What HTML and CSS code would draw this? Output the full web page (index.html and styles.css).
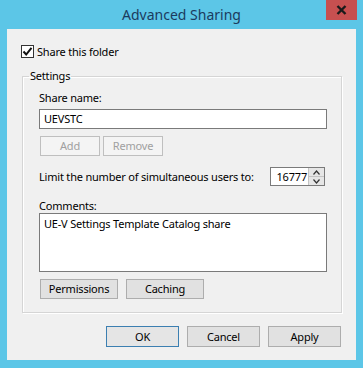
FILE: index.html
```html
<!DOCTYPE html>
<html>
<head>
<meta charset="utf-8">
<link rel="stylesheet" href="styles.css">
</head>
<body>
<div class="window">
  <div class="titlebar">
    <div class="title">Advanced Sharing</div>
    <div class="close">
      <svg width="11" height="10" viewBox="0 0 11 10"><path d="M1.5 1 L9.5 9 M9.5 1 L1.5 9" stroke="#1a1a1a" stroke-width="2.4" fill="none"/></svg>
    </div>
  </div>
  <div class="client">
    <div class="check-row">
      <span class="checkbox">
        <svg width="11" height="11" viewBox="0 0 11 11"><path d="M1.5 5.5 L4.2 8.5 L9.5 1.8" stroke="#111" stroke-width="2" fill="none"/></svg>
      </span>
      <span class="check-label">Share this folder</span>
    </div>
    <fieldset class="group">
      <legend class="legend">Settings</legend>
      <div class="label first">Share name:</div>
      <div class="textbox">UEVSTC</div>
      <div class="btn-row">
        <div class="btn disabled">Add</div>
        <div class="btn disabled">Remove</div>
      </div>
      <div class="limit-row">
        <span class="label">Limit the number of simultaneous users to:</span>
        <div class="spinner">
          <div class="spin-value">16777</div>
          <div class="spin-arrows">
            <div class="arrow"><svg width="7" height="5" viewBox="0 0 7 5"><path d="M0.5 4.5 L3.5 1 L6.5 4.5" stroke="#333" stroke-width="1.2" fill="none"/></svg></div>
            <div class="arrow"><svg width="7" height="5" viewBox="0 0 7 5"><path d="M0.5 0.5 L3.5 4 L6.5 0.5" stroke="#333" stroke-width="1.2" fill="none"/></svg></div>
          </div>
        </div>
      </div>
      <div class="label comments-label">Comments:</div>
      <div class="textarea">UE-V Settings Template Catalog share</div>
      <div class="btn-row perm-row">
        <div class="btn wide">Permissions</div>
        <div class="btn wide">Caching</div>
      </div>
    </fieldset>
    <div class="footer">
      <div class="btn dlg default">OK</div>
      <div class="btn dlg">Cancel</div>
      <div class="btn dlg">Apply</div>
    </div>
  </div>
</div>
</body>
</html>
```
FILE: styles.css
```css
html, body {
  margin: 0;
  padding: 0;
}
body {
  width: 363px;
  height: 368px;
  overflow: hidden;
  font-family: "Noto Sans", "Open Sans", sans-serif;
  font-size: 11px;
  letter-spacing: -0.2px;
  color: #000;
}
.window {
  width: 363px;
  height: 368px;
  background: #5cc6e7;
  display: flex;
  flex-direction: column;
}
.titlebar {
  height: 29px;
  display: flex;
  position: relative;
  justify-content: center;
}
.title {
  font-size: 14px;
  letter-spacing: 0;
  line-height: 29px;
  color: #1b3b5e;
}
.close {
  position: absolute;
  left: 326px;
  top: 0;
  width: 31px;
  height: 20px;
  background: #c75050;
  display: flex;
  align-items: center;
  justify-content: center;
}
.client {
  margin: 0 7px;
  height: 331px;
  background: #f0f0f0;
  display: flex;
  flex-direction: column;
}
.check-row {
  display: flex;
  align-items: center;
  margin-top: 16px;
  padding-left: 14px;
  height: 13px;
}
.checkbox {
  width: 11px;
  height: 11px;
  border: 1px solid #333;
  background: #fff;
  display: flex;
}
.check-label {
  margin-left: 3px;
  line-height: 13px;
}
.group {
  margin: 10px 14px 0 15px;
  padding: 6px 14px 13px 16px;
  border: 1px solid #d5d5d5;
  box-shadow: inset 1px 1px 0 #fff, 1px 1px 0 #fff;
  min-width: 0;
}
.legend {
  padding: 0 1px;
  margin-left: -10px;
  line-height: 16px;
}
.label {
  line-height: 16px;
}
.textbox {
  margin-top: 3px;
  height: 18px;
  border: 1px solid #7a7a7a;
  background: #fff;
  line-height: 18px;
  padding-left: 4px;
}
.btn-row {
  display: flex;
  gap: 3px;
  margin-top: 7px;
  padding-left: 1px;
}
.btn {
  height: 18px;
  border: 1px solid #adadad;
  background: #e1e1e1;
  display: flex;
  align-items: center;
  justify-content: center;
  line-height: 16px;
}
.btn.disabled {
  width: 58px;
  color: #a0a0a0;
  border-color: #bfbfbf;
  background: #f4f4f4;
}
.limit-row {
  display: flex;
  align-items: center;
  justify-content: space-between;
  margin-top: 11px;
  padding-right: 2px;
  height: 19px;
}
.spinner {
  display: flex;
  height: 19px;
  border: 1px solid #7a7a7a;
  background: #fff;
  box-sizing: border-box;
  width: 55px;
}
.spin-value {
  width: 37px;
  line-height: 17px;
  text-align: right;
  padding-right: 1px;
  box-sizing: border-box;
}
.spin-arrows {
  flex: 1;
  display: flex;
  flex-direction: column;
  background: #e6e6e6;
  border-left: 1px solid #c4c4c4;
}
.arrow {
  flex: 1;
  display: flex;
  align-items: center;
  justify-content: center;
}
.arrow + .arrow {
  border-top: 1px solid #c4c4c4;
}
.comments-label {
  margin-top: 13px;
  line-height: 14px;
}
.textarea {
  border: 1px solid #7a7a7a;
  background: #fff;
  padding: 2px 4px;
  box-sizing: border-box;
  height: 59px;
  line-height: 16px;
}
.perm-row {
  gap: 8px;
  margin-top: 7px;
}
.btn.wide {
  width: 76px;
}
.footer {
  display: flex;
  justify-content: flex-end;
  gap: 8px;
  margin-top: 13px;
  padding-right: 15px;
}
.btn.dlg {
  width: 71px;
  height: 19px;
}
.btn.default {
  border-color: #3c7fb1;
  background: #e5e5e5;
}
```
